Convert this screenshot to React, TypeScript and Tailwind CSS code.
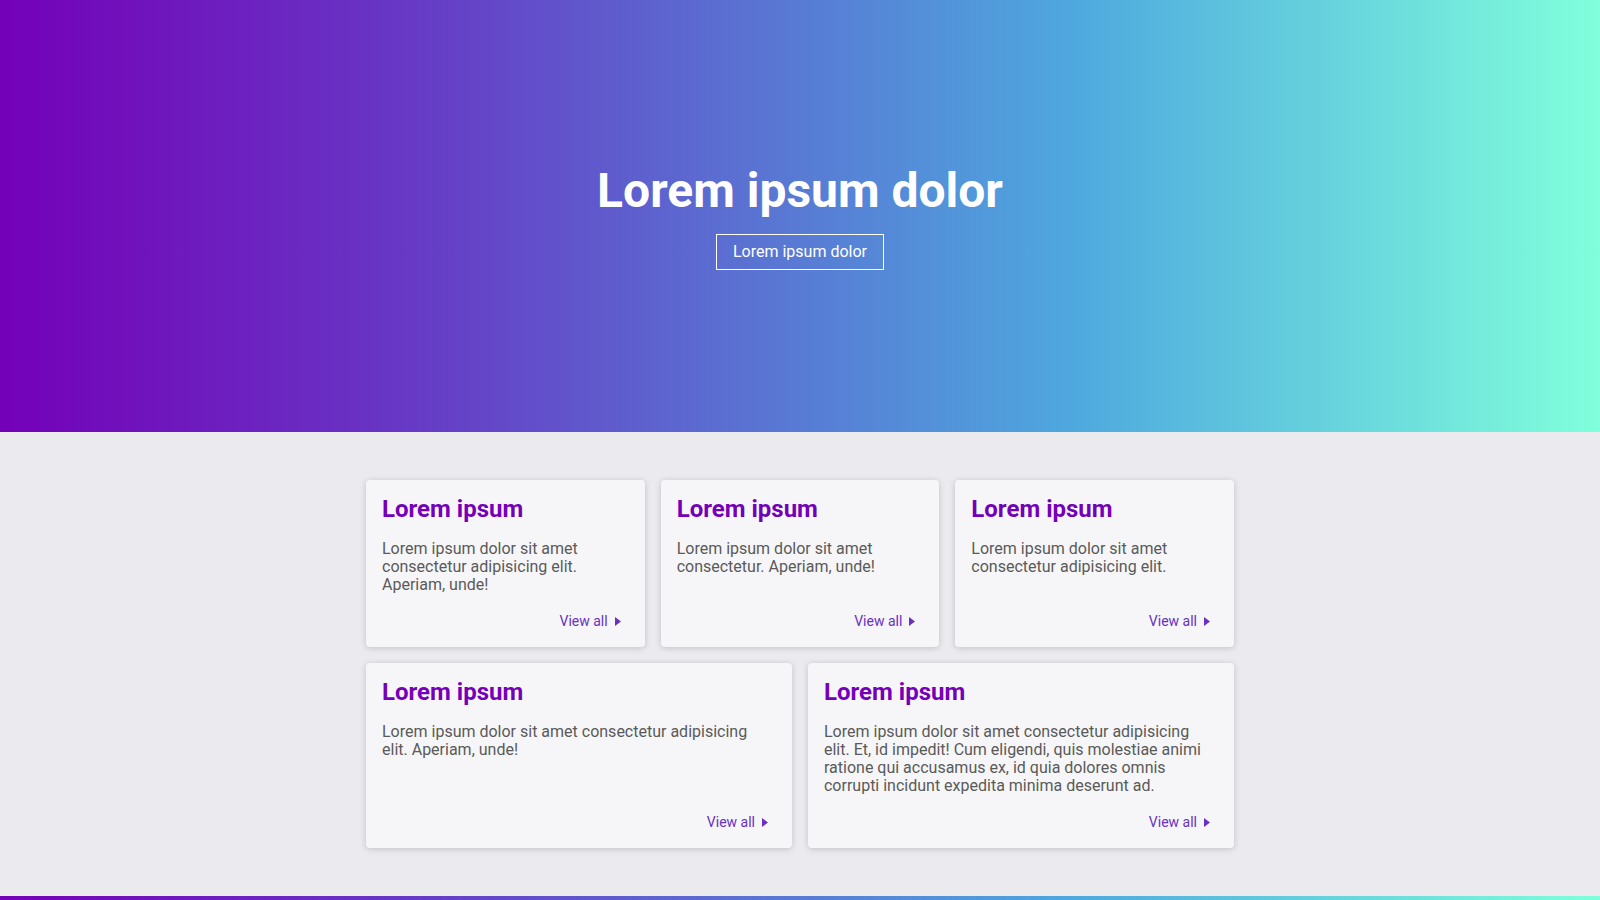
const gradient =
  'bg-[linear-gradient(to_right,#7400b8,#6930c3_22%,#5e60ce_40%,#4ea8de_67%,#80ffdb)]'

type Card = { body: string; span: string }

const cards: Card[] = [
  { body: 'Lorem ipsum dolor sit amet consectetur adipisicing elit. Aperiam, unde!', span: 'col-span-2' },
  { body: 'Lorem ipsum dolor sit amet consectetur. Aperiam, unde!', span: 'col-span-2' },
  { body: 'Lorem ipsum dolor sit amet consectetur adipisicing elit.', span: 'col-span-2' },
  { body: 'Lorem ipsum dolor sit amet consectetur adipisicing elit. Aperiam, unde!', span: 'col-span-3' },
  {
    body: 'Lorem ipsum dolor sit amet consectetur adipisicing elit. Et, id impedit! Cum eligendi, quis molestiae animi ratione qui accusamus ex, id quia dolores omnis corrupti incidunt expedita minima deserunt ad.',
    span: 'col-span-3',
  },
]

function App() {
  return (
    <div className="min-h-screen bg-[#ebeaef] font-['Roboto',sans-serif]">
      <header className={`flex h-[432px] flex-col items-center justify-center ${gradient}`}>
        <h1 className="text-[48px] font-bold leading-[56px] text-white">Lorem ipsum dolor</h1>
        <button
          className="mt-[15px] h-9 border border-white px-4 text-base text-white"
          type="button"
        >
          Lorem ipsum dolor
        </button>
      </header>

      <main className="py-12">
        <div className="mx-auto grid w-[868px] grid-cols-6 gap-4">
          {cards.map((card, i) => (
            <div
              className={`flex flex-col rounded bg-[#f6f6f8] px-4 pt-[15px] pb-3 shadow-[0_1px_6px_rgba(0,0,0,0.18)] ${card.span}`}
              key={i}
            >
              <h3 className="text-2xl font-bold leading-[28px] text-[#7400b8]">Lorem ipsum</h3>
              <p className="mt-[17px] mb-[13px] text-base leading-[18px] text-[#5a5a5a]">{card.body}</p>
              <a
                className="mt-auto flex items-center gap-[7px] self-end px-2 py-1 text-sm leading-5 text-[#6930c3]"
                href="#"
              >
                View all
                <svg width="6" height="9" viewBox="0 0 6 9" fill="currentColor">
                  <path d="M0 0 L6 4.5 L0 9 Z" />
                </svg>
              </a>
            </div>
          ))}
        </div>
      </main>

      <footer className={`h-1 ${gradient}`} />
    </div>
  )
}

export default App
